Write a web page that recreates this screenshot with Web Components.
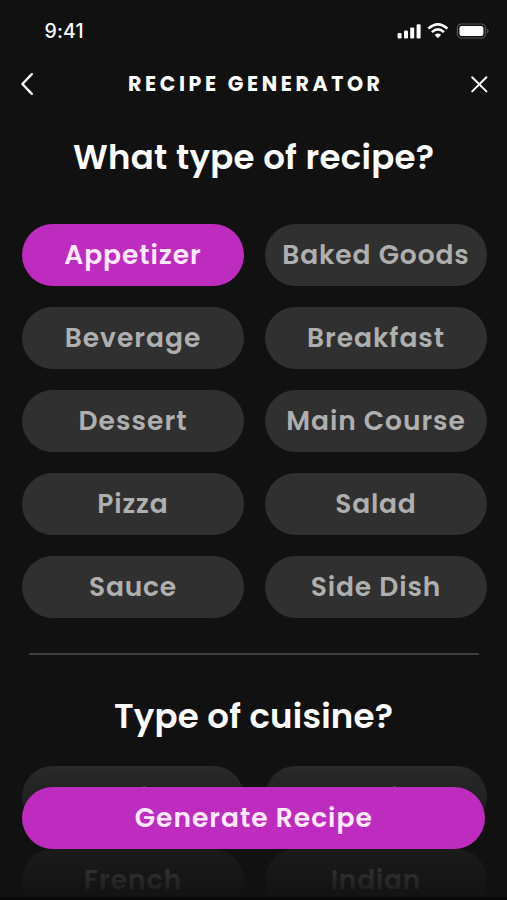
<!DOCTYPE html>
<html lang="en">
<head>
<meta charset="utf-8">
<title>Recipe Generator</title>
<style>
    html, body {
        margin: 0;
        height: 100%;
        overflow: hidden;
        background: #111;
    }

    body {
        --app-bg: #111;
        --app-accent: #be2bbf;
        --app-chip: #303030;
        --app-muted: #afafaf;
        color: #fff;
        font-family: Poppins, Inter, sans-serif;
        font-weight: 600;
    }
</style>
</head>
<body>
<recipe-screen>
    <status-bar slot="status"><fit-text width="39">9:41</fit-text></status-bar>
    <nav-bar slot="nav"><fit-text width="252">RECIPE GENERATOR</fit-text></nav-bar>

    <recipe-section>
        <fit-text slot="title" width="361">What type of recipe?</fit-text>
        <recipe-chip selected><fit-text width="136.5">Appetizer</fit-text></recipe-chip>
        <recipe-chip><fit-text width="186.5">Baked Goods</fit-text></recipe-chip>
        <recipe-chip><fit-text width="135.5">Beverage</fit-text></recipe-chip>
        <recipe-chip><fit-text width="137">Breakfast</fit-text></recipe-chip>
        <recipe-chip><fit-text width="108">Dessert</fit-text></recipe-chip>
        <recipe-chip><fit-text width="178.5">Main Course</fit-text></recipe-chip>
        <recipe-chip><fit-text width="70.5">Pizza</fit-text></recipe-chip>
        <recipe-chip><fit-text width="80.5">Salad</fit-text></recipe-chip>
        <recipe-chip><fit-text width="87">Sauce</fit-text></recipe-chip>
        <recipe-chip><fit-text width="129.5">Side Dish</fit-text></recipe-chip>
    </recipe-section>

    <recipe-section divided>
        <fit-text slot="title" width="279">Type of cuisine?</fit-text>
        <recipe-chip peek style="--peek-x: 121px"></recipe-chip>
        <recipe-chip peek style="--peek-x: 128px"></recipe-chip>
        <recipe-chip><fit-text width="97.5">French</fit-text></recipe-chip>
        <recipe-chip><fit-text width="89.5">Indian</fit-text></recipe-chip>
    </recipe-section>

    <recipe-action slot="action"><fit-text width="237">Generate Recipe</fit-text></recipe-action>
</recipe-screen>

<script>
// Spreads its text to a given width with letter spacing
class FitText extends HTMLElement {
    constructor() {
        super();
        this.attachShadow({ mode: "open" });
    }

    connectedCallback() {
        this.render();
        this.fit();
    }

    fit() {
        const width = Number(this.getAttribute("width"));
        const count = this.textContent.length;
        if (!width || count < 2) return;

        const text = this.shadowRoot.querySelector(".text");
        const spacing = (width - text.getBoundingClientRect().width) / (count - 1);
        text.style.letterSpacing = `${spacing}px`;
        text.style.marginRight = `${-spacing}px`;
    }

    render() {
        this.shadowRoot.innerHTML = `
        <style>
            :host {
                display: inline-block;
                white-space: nowrap;
            }

            .text {
                display: inline-block;
            }
        </style>
        <span class="text"><slot></slot></span>
        `;
    }
}

class StatusBar extends HTMLElement {
    constructor() {
        super();
        this.attachShadow({ mode: "open" });
    }

    connectedCallback() {
        this.shadowRoot.innerHTML = `
        <style>
            :host {
                display: flex;
                align-items: center;
                justify-content: space-between;
                box-sizing: border-box;
                height: 61px;
                padding: 0 18px 0 44.5px;
                font: 500 19.5px/24px Inter, sans-serif;
            }

            svg {
                display: block;
                width: 92px;
                height: 18px;
            }
        </style>
        <slot></slot>
        <svg viewBox="0 0 92 18" fill="#fff">
            <rect x="0.6" y="11" width="4" height="5.4" rx="1.2"/>
            <rect x="7" y="8.6" width="4" height="7.8" rx="1.2"/>
            <rect x="13.2" y="5.4" width="4" height="11" rx="1.2"/>
            <rect x="19.6" y="2.2" width="4" height="14.2" rx="1.2"/>
            <g fill="none" stroke="#fff" stroke-width="2.6">
                <path d="M31.4 6.6Q40.9-1.8 50.4 6.6"/>
                <path d="M34.9 10.1Q40.9 4.8 46.9 10.1"/>
            </g>
            <path d="M37.7 12.8Q40.9 10.3 44.1 12.8L40.9 16.2Z"/>
            <rect x="60.4" y="2" width="28" height="14" rx="4" fill="none" stroke="#555" stroke-width="1.2"/>
            <rect x="62.4" y="3.9" width="24" height="10.2" rx="2.3"/>
            <path d="M89.9 6.6Q91.7 7.3 91.7 9T89.9 11.4Z" fill="#555"/>
        </svg>
        `;
    }
}

class NavBar extends HTMLElement {
    constructor() {
        super();
        this.attachShadow({ mode: "open" });
    }

    connectedCallback() {
        this.shadowRoot.innerHTML = `
        <style>
            :host {
                display: flex;
                align-items: center;
                justify-content: space-between;
                box-sizing: border-box;
                height: 46px;
                padding: 0 18px 0 19px;
                font-size: 20.5px;
                font-weight: 700;
                line-height: 30px;
            }

            svg {
                display: block;
                width: 20px;
                height: 24px;
                fill: none;
                stroke: #fff;
                stroke-width: 2.3;
                stroke-linecap: round;
                stroke-linejoin: round;
            }
        </style>
        <svg viewBox="0 0 20 24"><path d="M12.8 2.1L3.4 12L12.8 21.9"/></svg>
        <slot></slot>
        <svg viewBox="0 0 20 24"><path d="M3.2 5.2L17.4 19.4M17.4 5.2L3.2 19.4" stroke-width="2"/></svg>
        `;
    }
}

class RecipeSection extends HTMLElement {
    constructor() {
        super();
        this.attachShadow({ mode: "open" });
    }

    connectedCallback() {
        this.shadowRoot.innerHTML = `
        <style>
            :host {
                display: block;
                padding: 25px 20.5px 0 21.5px;
            }

            :host([divided]) {
                padding-top: 35px;
            }

            .divider {
                display: none;
                height: 2px;
                margin: 0 7.5px 36px;
                background: #3e3e3e;
            }

            :host([divided]) .divider {
                display: block;
            }

            h2 {
                margin: 0 1px 42px 0;
                font-size: 34px;
                font-weight: 600;
                line-height: 50px;
                text-align: center;
            }

            :host([divided]) h2 {
                margin-bottom: 25px;
            }

            .chips {
                display: grid;
                grid-template-columns: 1fr 1fr;
                gap: 21px;
            }
        </style>
        <div class="divider"></div>
        <h2><slot name="title"></slot></h2>
        <div class="chips"><slot></slot></div>
        `;
    }
}

class RecipeChip extends HTMLElement {
    constructor() {
        super();
        this.attachShadow({ mode: "open" });
    }

    connectedCallback() {
        this.shadowRoot.innerHTML = `
        <style>
            :host {
                display: flex;
                align-items: center;
                justify-content: center;
                height: 62px;
                border-radius: 31px;
                background: var(--app-chip);
                color: var(--app-muted);
                font-size: 26.5px;
                line-height: 40px;
                cursor: pointer;
            }

            :host([selected]) {
                background: var(--app-accent);
                color: #ffeaff;
            }

            /* Tip of the label showing over the floating button */
            :host([peek]) {
                background: linear-gradient(#686868, #686868) var(--peek-x) 20px / 3px 1px no-repeat var(--app-chip);
            }
        </style>
        <slot></slot>
        `;
    }
}

class RecipeAction extends HTMLElement {
    constructor() {
        super();
        this.attachShadow({ mode: "open" });
    }

    connectedCallback() {
        this.shadowRoot.innerHTML = `
        <style>
            :host {
                display: block;
            }

            button {
                display: flex;
                align-items: center;
                justify-content: center;
                width: 100%;
                height: 62.5px;
                padding: 0;
                border: 0;
                border-radius: 32px;
                background: var(--app-accent);
                color: #ffeaff;
                font: inherit;
                font-size: 26.5px;
                line-height: 40px;
            }
        </style>
        <button><slot></slot></button>
        `;
    }
}

class RecipeScreen extends HTMLElement {
    constructor() {
        super();
        this.attachShadow({ mode: "open" });
    }

    connectedCallback() {
        this.shadowRoot.innerHTML = `
        <style>
            :host {
                display: block;
                position: relative;
                height: 900px;
                overflow: hidden;
                background: var(--app-bg);
            }

            /* Fades the list out behind the floating button */
            .fade {
                position: absolute;
                inset: 750px 0 0;
                box-sizing: border-box;
                padding: 36.5px 22px 0 21.5px;
                background: linear-gradient(rgba(17, 17, 17, 0), rgba(17, 17, 17, .35) 30px, rgba(17, 17, 17, .72) 105px, rgba(17, 17, 17, .94) 146px);
                border-bottom: 3px solid #080808;
            }
        </style>
        <slot name="status"></slot>
        <slot name="nav"></slot>
        <slot></slot>
        <div class="fade"><slot name="action"></slot></div>
        `;
    }
}

customElements.define("recipe-screen", RecipeScreen);
customElements.define("status-bar", StatusBar);
customElements.define("nav-bar", NavBar);
customElements.define("recipe-section", RecipeSection);
customElements.define("recipe-chip", RecipeChip);
customElements.define("recipe-action", RecipeAction);
customElements.define("fit-text", FitText);
</script>
</body>
</html>
